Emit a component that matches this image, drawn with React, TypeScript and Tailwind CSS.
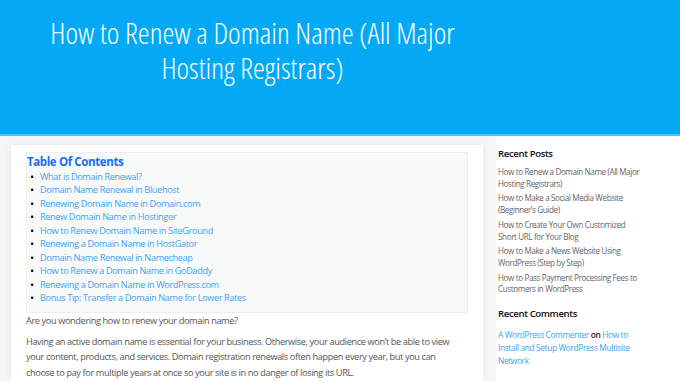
import React from "react";

const toc = [
  "What is Domain Renewal?",
  "Domain Name Renewal in Bluehost",
  "Renewing Domain Name in Domain.com",
  "Renew Domain Name in Hostinger",
  "How to Renew Domain Name in SiteGround",
  "Renewing a Domain Name in HostGator",
  "Domain Name Renewal in Namecheap",
  "How to Renew a Domain Name in GoDaddy",
  "Renewing a Domain Name in WordPress.com",
  "Bonus Tip: Transfer a Domain Name for Lower Rates",
];

const posts = [
  ["How to Renew a Domain Name (All Major", "Hosting Registrars)"],
  ["How to Make a Social Media Website", "(Beginner’s Guide)"],
  ["How to Create Your Own Customized", "Short URL for Your Blog"],
  ["How to Make a News Website Using", "WordPress (Step by Step)"],
  ["How to Pass Payment Processing Fees to", "Customers in WordPress"],
];

export default function App() {
  return (
    <div
      className="w-[680px] h-[381px] overflow-hidden bg-white tracking-[-0.38px]"
      style={{ fontFamily: '"Open Sans", "Noto Sans", sans-serif' }}
    >
      <header className="h-[136px] bg-[#03a9f4] border-b-2 border-[#4fc1f7]">
        <div className="w-[505px] pt-[15px] flex justify-center">
          <h1 className="w-[440px] text-center text-white font-light text-[30px] leading-[35px] tracking-normal [font-stretch:78%]">
            How to Renew a Domain Name (All Major Hosting Registrars)
          </h1>
        </div>
      </header>
      <div className="flex">
        <div className="w-[496px] bg-[#f6f6f6] pt-[9px] pl-[11px] pr-[13px]">
          <main className="bg-white shadow-[0_0_8px_rgba(0,0,0,0.06)] px-[15px] pt-[7px] h-[240px]">
            <div className="bg-[#f8f9f9] border border-[#eeeeee] pt-[1px] pb-[8px] h-[161px]">
              <div className="text-[#1a6df0] font-bold text-[11.5px] leading-[16px]">
                Table Of Contents
              </div>
              <ul>
                {toc.map((t) => (
                  <li key={t} className="flex items-center h-[13.5px] text-[9.2px]">
                    <span className="w-[13px] pl-[3px] text-black text-[11px] leading-[10px]">•</span>
                    <span className="text-[#43a3f3]">{t}</span>
                  </li>
                ))}
              </ul>
            </div>
            <p className="text-[#555555] text-[9.2px] leading-[15.5px]">
              Are you wondering how to renew your domain name?
            </p>
            <p className="text-[#555555] text-[9.2px] leading-[15.5px] mt-[5px] w-[434px]">
              Having an active domain name is essential for your business. Otherwise, your audience won’t be able to view your content, products, and services. Domain registration renewals often happen every year, but you can choose to pay for multiple years at once so your site is in no danger of losing its URL.
            </p>
          </main>
        </div>
        <aside className="flex-1 pl-[2px] pt-[11px] pr-[20px]">
          <h2 className="text-[#111] font-semibold text-[9.6px] leading-[14px]">Recent Posts</h2>
          <ul className="mt-[5px] flex flex-col gap-[3px]">
            {posts.map((p) => (
              <li key={p[0]} className="text-[#666666] text-[8.1px] leading-[11.7px]">
                <div>{p[0]}</div>
                <div>{p[1]}</div>
              </li>
            ))}
          </ul>
          <h2 className="text-[#111] font-semibold text-[9.6px] leading-[14px] mt-[12px]">
            Recent Comments
          </h2>
          <div className="mt-[7px] text-[8.4px] leading-[13px] w-[140px]">
            <span className="text-[#43a3f3]">A WordPress Commenter</span>{" "}
            <span className="text-[#222] font-semibold">on</span>{" "}
            <span className="text-[#43a3f3]">How to Install and Setup WordPress Multisite Network</span>
          </div>
        </aside>
      </div>
    </div>
  );
}
